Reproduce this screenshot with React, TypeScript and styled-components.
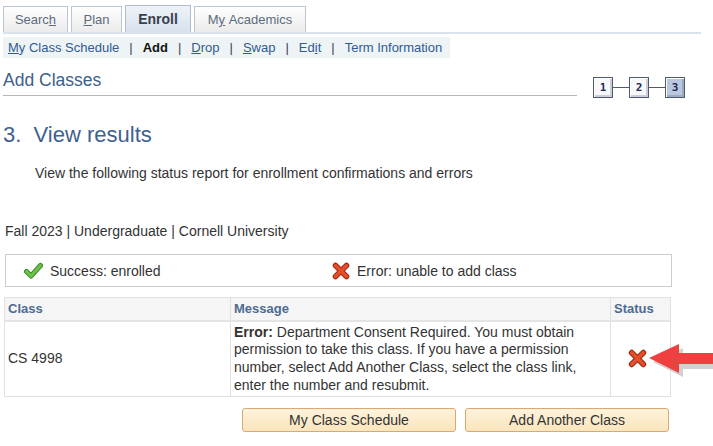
import React from 'react';
import styled, {createGlobalStyle} from 'styled-components';

const GlobalStyle = createGlobalStyle`
  body {
    margin: 0;
    background: #fff;
    font-family: 'Liberation Sans', Arial, sans-serif;
    color: #333;
  }
`;

const Page = styled.div`
  position: relative;
  width: 713px;
  height: 446px;
  overflow: hidden;
  padding-left: 3px;
  box-sizing: border-box;
`;

const TabBar = styled.div`
  display: flex;
  align-items: flex-end;
  gap: 3px;
  width: 698px;
  height: 32px;
  border-bottom: 2px solid #d9e3ee;
`;

const Tab = styled.div<{$active?: boolean; $w: number}>`
  display: flex;
  align-items: center;
  justify-content: center;
  width: ${(p) => p.$w}px;
  height: ${(p) => (p.$active ? '27px' : '26px')};
  box-sizing: border-box;
  border: 1px solid ${(p) => (p.$active ? '#aebccc' : '#bcc6d1')};
  border-bottom: none;
  background: ${(p) => (p.$active ? 'linear-gradient(#eef3f9, #d7e2ee)' : 'linear-gradient(#ffffff, #ebebeb)')};
  font-size: ${(p) => (p.$active ? '14px' : '13px')};
  font-weight: ${(p) => (p.$active ? 'bold' : 'normal')};
  color: ${(p) => (p.$active ? '#39404c' : '#5d6c80')};
`;

const SubNav = styled.div`
  display: flex;
  align-items: center;
  width: 447px;
  height: 21px;
  margin-top: 3px;
  padding-left: 5px;
  box-sizing: border-box;
  background: #eef3f6;
  font-size: 13px;
`;

const NavLink = styled.span<{$current?: boolean}>`
  color: ${(p) => (p.$current ? '#111' : '#2f5b94')};
  font-weight: ${(p) => (p.$current ? 'bold' : 'normal')};
`;

const Sep = styled.span`
  margin: 0 10px;
  color: #3b3b55;
`;

const TitleRow = styled.div`
  display: flex;
  align-items: flex-start;
  margin-top: 12px;
`;

const PageTitle = styled.div`
  width: 574px;
  padding-bottom: 5px;
  border-bottom: 1px solid #b7b7b7;
  font-size: 17.5px;
  line-height: 20px;
  color: #3d5f8b;
`;

const Steps = styled.div`
  display: flex;
  align-items: center;
  margin: 7px 0 0 16px;
`;

const StepBox = styled.div<{$active?: boolean}>`
  width: 20px;
  height: 21px;
  box-sizing: border-box;
  border: 1px solid #4f5a72;
  box-shadow: inset 1px 1px 0 #fff, inset -2px -2px 0 ${(p) => (p.$active ? '#9aabc2' : '#c9ced8')};
  background: ${(p) => (p.$active ? '#b9c8dc' : '#f7f8fa')};
  display: flex;
  align-items: center;
  justify-content: center;
  font-family: 'DejaVu Sans Mono', monospace;
  font-weight: bold;
  font-size: 11px;
  color: #1c2b58;
`;

const StepLine = styled.div`
  width: 16px;
  height: 1px;
  background: #4f5a72;
`;

const Heading = styled.h2`
  margin: 24px 0 0 0;
  font-weight: normal;
  font-size: 22px;
  line-height: 26px;
  color: #3f6190;
`;

const Desc = styled.p`
  margin: 17px 0 0 32px;
  font-size: 14px;
  line-height: 17px;
`;

const Term = styled.p`
  margin: 41px 0 0 2px;
  font-size: 14px;
  line-height: 17px;
`;

const Legend = styled.div`
  display: grid;
  grid-template-columns: 308px 1fr;
  align-items: center;
  width: 667px;
  height: 33px;
  margin: 14px 0 0 2px;
  padding-left: 18px;
  box-sizing: border-box;
  border: 1px solid #cccccc;
  font-size: 14px;
`;

const LegendItem = styled.div`
  display: flex;
  align-items: center;
  gap: 7px;
`;

const Table = styled.table`
  width: 666px;
  margin: 10px 0 0 1px;
  border-collapse: collapse;
  border: 1px solid #c9c9c9;
  table-layout: fixed;
`;

const Th = styled.th<{$w: number}>`
  width: ${(p) => p.$w}px;
  height: 23px;
  padding: 0 3px;
  box-sizing: border-box;
  text-align: left;
  background: #f5f5f5;
  border: 1px solid #e0e0e0;
  border-bottom: 2px solid #e4e4e4;
  font-size: 13px;
  color: #4c6b92;
`;

const Td = styled.td<{$center?: boolean}>`
  height: 76px;
  padding: 2px 3px;
  box-sizing: border-box;
  border: 1px solid #e0e0e0;
  font-size: 14px;
  line-height: 17.7px;
  vertical-align: middle;
  text-align: ${(p) => (p.$center ? 'center' : 'left')};
`;

const IconWrap = styled.span`
  display: inline-flex;
  vertical-align: middle;
  margin-right: 6px;
`;

const Buttons = styled.div`
  display: flex;
  gap: 9px;
  margin: 11px 0 0 239px;
`;

const Button = styled.button<{$w: number}>`
  width: ${(p) => p.$w}px;
  height: 24px;
  border: 1px solid #dba872;
  border-radius: 3px;
  background: linear-gradient(#fdf3dd, #fbe5bc);
  font-family: 'Liberation Sans', Arial, sans-serif;
  font-size: 14px;
  color: #333;
  padding: 0;
`;

const Arrow = styled.svg`
  position: absolute;
  left: 647px;
  top: 342px;
`;

const CheckIcon = () => (
  <svg width="19" height="18" viewBox="0 0 19 18">
    <path d="M2.5 9.5 L7 14 L16.5 3.5" fill="none" stroke="#3d8a2a" strokeWidth="5" strokeLinecap="round" strokeLinejoin="round" />
    <path d="M2.5 9.5 L7 14 L16.5 3.5" fill="none" stroke="#70c04c" strokeWidth="3" strokeLinecap="round" strokeLinejoin="round" />
  </svg>
);

const XIcon = ({size = 18}: {size?: number}) => (
  <svg width={size} height={size} viewBox="0 0 18 18">
    <path d="M3.5 3.5 L14.5 14.5 M14.5 3.5 L3.5 14.5" fill="none" stroke="#a5260f" strokeWidth="5.5" strokeLinecap="round" />
    <path d="M3.5 3.5 L14.5 14.5 M14.5 3.5 L3.5 14.5" fill="none" stroke="#e2502c" strokeWidth="3.3" strokeLinecap="round" />
  </svg>
);

const App = () => {
  return (
    <>
      <GlobalStyle />
      <Page>
        <TabBar>
          <Tab $w={65}>
            Searc<u>h</u>
          </Tab>
          <Tab $w={51}>
            <u>P</u>lan
          </Tab>
          <Tab $w={66} $active>
            Enroll
          </Tab>
          <Tab $w={112}>
            M<u>y</u>&nbsp;Academics
          </Tab>
        </TabBar>
        <SubNav>
          <NavLink>
            <u>M</u>y Class Schedule
          </NavLink>
          <Sep>|</Sep>
          <NavLink $current>Add</NavLink>
          <Sep>|</Sep>
          <NavLink>
            <u>D</u>rop
          </NavLink>
          <Sep>|</Sep>
          <NavLink>
            <u>S</u>wap
          </NavLink>
          <Sep>|</Sep>
          <NavLink>
            Ed<u>i</u>t
          </NavLink>
          <Sep>|</Sep>
          <NavLink>Term Information</NavLink>
        </SubNav>
        <TitleRow>
          <PageTitle>Add Classes</PageTitle>
          <Steps>
            <StepBox>1</StepBox>
            <StepLine />
            <StepBox>2</StepBox>
            <StepLine />
            <StepBox $active>3</StepBox>
          </Steps>
        </TitleRow>
        <Heading>3.&nbsp; View results</Heading>
        <Desc>View the following status report for enrollment confirmations and errors</Desc>
        <Term>Fall 2023 | Undergraduate | Cornell University</Term>
        <Legend>
          <LegendItem>
            <CheckIcon />
            Success: enrolled
          </LegendItem>
          <LegendItem>
            <XIcon />
            Error: unable to add class
          </LegendItem>
        </Legend>
        <Table>
          <thead>
            <tr>
              <Th $w={226}>Class</Th>
              <Th $w={380}>Message</Th>
              <Th $w={60}>Status</Th>
            </tr>
          </thead>
          <tbody>
            <tr>
              <Td>CS 4998</Td>
              <Td>
                <b>Error:</b> Department Consent Required. You must obtain permission to take this class. If you
                have a permission number, select Add Another Class, select the class link, enter the number and
                resubmit.
              </Td>
              <Td $center>
                <IconWrap>
                  <XIcon size={19} />
                </IconWrap>
              </Td>
            </tr>
          </tbody>
        </Table>
        <Buttons>
          <Button $w={214}>My Class Schedule</Button>
          <Button $w={204}>Add Another Class</Button>
        </Buttons>
        <Arrow width="70" height="36" viewBox="0 0 70 36">
          <path d="M4 18 L34 4 L34 12 L70 12 L70 25 L34 25 L34 33 Z" fill="#9a9a9a" opacity="0.45" transform="translate(2 2)" />
          <path d="M2 16 L32 2 L32 11 L70 11 L70 22 L32 22 L32 31 Z" fill="#ef3f3f" />
        </Arrow>
      </Page>
    </>
  );
};

export default App;
